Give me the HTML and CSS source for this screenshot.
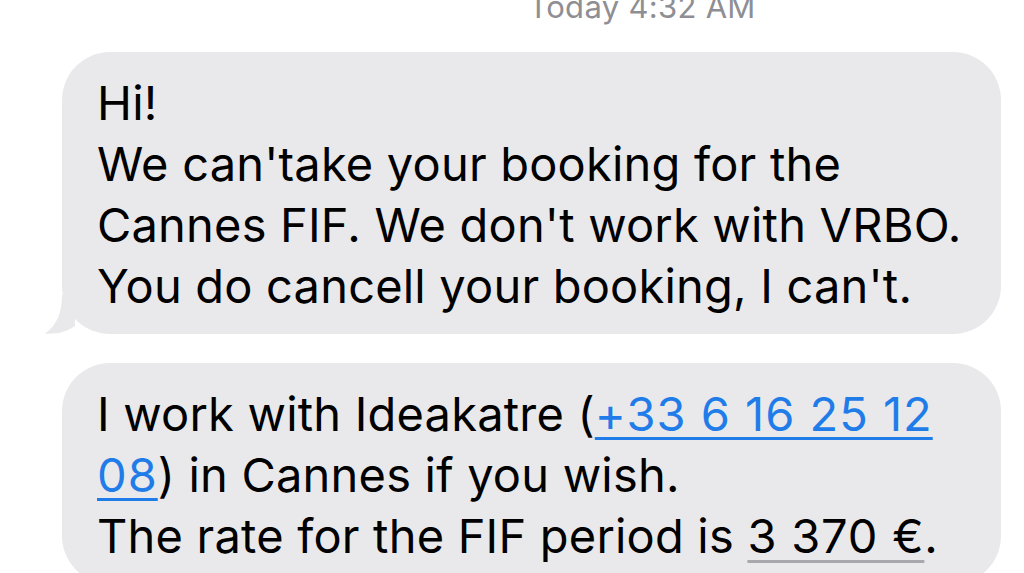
FILE: index.html
```html
<!DOCTYPE html>
<html>
<head>
<meta charset="utf-8">
<link rel="stylesheet" href="styles.css">
</head>
<body>
<div class="thread">
  <div class="stamp"><span class="day">Today</span> 4:32 AM</div>
  <div class="bubble tail">
    <p>Hi!<br>We can'take your booking for the<br>Cannes FIF. We don't work with VRBO.<br>You do cancell your booking, I can't.</p>
    <svg class="tail-svg" width="30" height="40" viewBox="0 0 30 40"><path d="M17 0 C17 18 12 30 0 38.5 C10 39.5 22 37 30 31 L30 0 Z" fill="#e9e9eb"/></svg>
  </div>
  <div class="bubble second">
    <p>I work with Ideakatre (<a class="link">+33 6 16 25 12<br>08</a>) in Cannes if you wish.<br>The rate for the FIF period is <span class="price">3 370 €</span>.</p>
  </div>
</div>
</body>
</html>
```
FILE: styles.css
```css
html, body {
  margin: 0;
  padding: 0;
  background: #ffffff;
  overflow: hidden;
}
.thread {
  width: 1024px;
  height: 573px;
  font-family: Inter, "Liberation Sans", sans-serif;
  display: flex;
  flex-direction: column;
}
.stamp {
  margin-top: -11px;
  height: 34px;
  line-height: 36px;
  font-size: 31px;
  color: #8e8e93;
  text-align: center;
  padding-left: 260px;
  letter-spacing: 0.3px;
}
.bubble {
  position: relative;
  margin-left: 62px;
  width: 939px;
  box-sizing: border-box;
  background: #e9e9eb;
  border-radius: 48px;
  padding: 20px 10px 18px 35px;
}
.bubble p {
  margin: 0;
  font-size: 47px;
  line-height: 61px;
  color: #000;
  letter-spacing: 0.2px;
}
.tail {
  margin-top: 29px;
}
.tail-svg {
  position: absolute;
  left: -17px;
  bottom: -1px;
}
.second {
  margin-top: 29px;
}
.link {
  color: #1f7ce8;
  letter-spacing: 1px;
  text-decoration: underline;
  text-decoration-thickness: 3px;
  text-underline-offset: 6px;
}
.price {
  letter-spacing: 0.8px;
  text-decoration: underline;
  text-decoration-color: #a9a9ad;
  text-decoration-thickness: 3px;
  text-underline-offset: 7px;
}
```
